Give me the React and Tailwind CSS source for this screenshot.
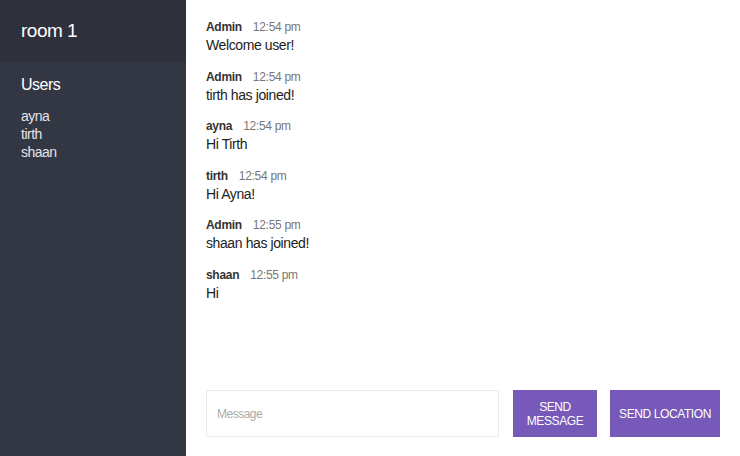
const messages = [
  { user: "Admin", time: "12:54 pm", text: "Welcome user!" },
  { user: "Admin", time: "12:54 pm", text: "tirth has joined!" },
  { user: "ayna", time: "12:54 pm", text: "Hi Tirth" },
  { user: "tirth", time: "12:54 pm", text: "Hi Ayna!" },
  { user: "Admin", time: "12:55 pm", text: "shaan has joined!" },
  { user: "shaan", time: "12:55 pm", text: "Hi" },
];

const users = ["ayna", "tirth", "shaan"];

export default function App() {
  return (
    <div
      className="flex h-[456px] w-[740px] overflow-hidden bg-white"
      style={{ fontFamily: '"Liberation Sans", Arial, sans-serif' }}
    >
      {/* Sidebar */}
      <div className="flex w-[186px] shrink-0 flex-col bg-[#333744] text-white">
        <div className="flex h-[62px] items-center bg-[#2e303c] px-[21px]">
          <h1 className="text-[19px] font-normal tracking-[-0.5px]">room 1</h1>
        </div>
        <div className="px-[21px] pt-[13px]">
          <h2 className="text-[16px] leading-[20px] tracking-[-0.5px]">Users</h2>
          <ul className="mt-[12px] text-[14px] leading-[18px] tracking-[-0.5px] text-[#e4e4e8]">
            {users.map((u) => (
              <li key={u}>{u}</li>
            ))}
          </ul>
        </div>
      </div>

      {/* Chat */}
      <div className="flex flex-1 flex-col">
        <div className="flex-1 px-[20px] pt-[18px]">
          {messages.map((m, i) => (
            <div key={i} className="mb-[13.5px]">
              <p className="flex items-center gap-[11px] text-[12px] leading-[18px] tracking-[-0.3px]">
                <span className="font-bold text-[#333]">{m.user}</span>
                <span className="text-[#777]">{m.time}</span>
              </p>
              <p className="text-[14px] leading-[18px] tracking-[-0.4px] text-[#222]">{m.text}</p>
            </div>
          ))}
        </div>

        {/* Compose */}
        <div className="flex items-stretch px-[20px] pb-[19px]">
          <input
            placeholder="Message"
            className="h-[47px] flex-1 border border-[#ececec] px-[10px] text-[12px] tracking-[-0.5px] text-[#333] outline-none placeholder:text-[#aaa]"
          />
          <button className="ml-[14px] h-[47px] w-[84px] bg-[#7659b8] text-[12px] leading-[14px] tracking-[-0.4px] text-white">
            SEND MESSAGE
          </button>
          <button className="ml-[13px] h-[47px] w-[110px] bg-[#7659b8] text-[12px] leading-[14px] tracking-[-0.4px] text-white">
            SEND LOCATION
          </button>
        </div>
      </div>
    </div>
  );
}
